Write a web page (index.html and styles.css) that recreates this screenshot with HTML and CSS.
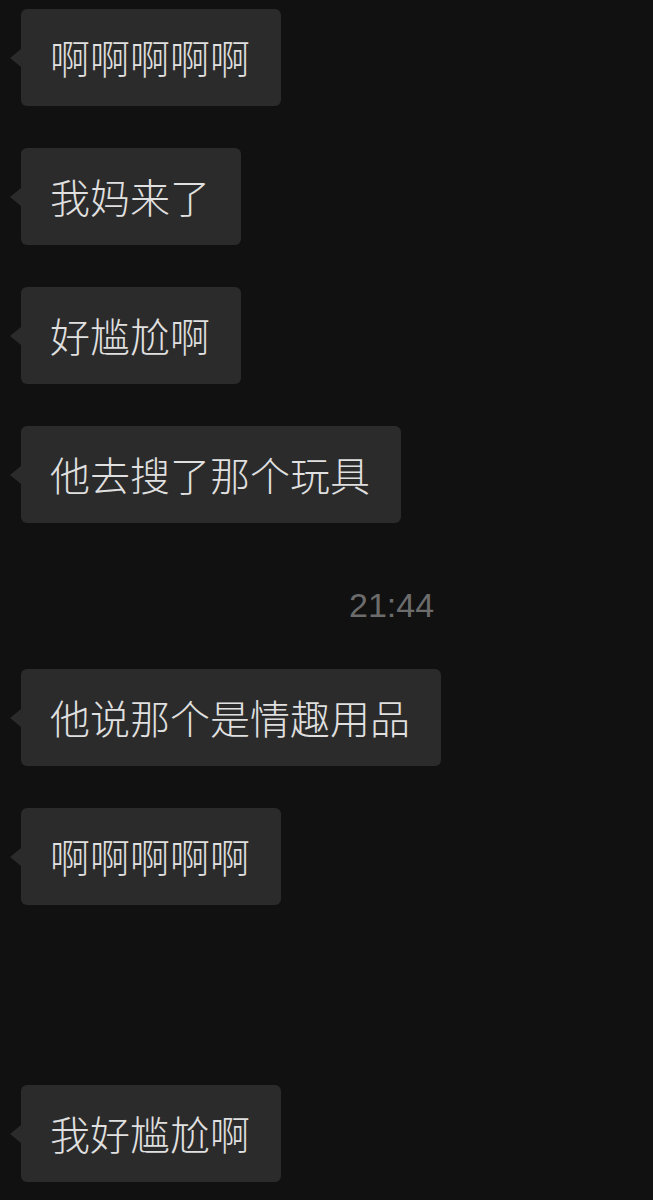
FILE: index.html
```html
<!DOCTYPE html>
<html lang="zh-CN">
<head>
    <meta charset="UTF-8">
    <meta name="viewport" content="width=device-width, initial-scale=1.0">
    <title>聊天记录</title>
    <link rel="stylesheet" href="styles.css">
</head>
<body>
    <div class="chat">
        <div class="bubble">啊啊啊啊啊</div>
        <div class="bubble">我妈来了</div>
        <div class="bubble">好尴尬啊</div>
        <div class="bubble">他去搜了那个玩具</div>

        <div class="time">21:44</div>

        <div class="bubble">他说那个是情趣用品</div>
        <div class="bubble">啊啊啊啊啊</div>

        <div class="bubble later">我好尴尬啊</div>
    </div>
</body>
</html>
```

FILE: styles.css
```css
body {
    margin: 0;
    background-color: #111111;
    font-family: "Noto Sans CJK SC", "Noto Sans", sans-serif;
}
.chat {
    display: flex;
    flex-direction: column;
    align-items: flex-start;
    gap: 42px;
    padding: 9px 0 0 21px;
}
.bubble {
    position: relative;
    background-color: #2b2b2b;
    color: #e0e0e0;
    font-size: 40px;
    font-weight: 300;
    line-height: 57px;
    padding: 20px 31px 20px 29px;
    border-radius: 6px;
}
/* the little tail on the left */
.bubble::before {
    content: "";
    position: absolute;
    left: -11px;
    top: 50%;
    margin-top: -9px;
    border-top: 9px solid transparent;
    border-bottom: 9px solid transparent;
    border-right: 11px solid #2b2b2b;
}
.time {
    color: #6c6c6c;
    font-family: "Liberation Sans", Arial, sans-serif;
    font-size: 34px;
    line-height: 40px;
    margin: 20px 0 2px 328px;
}
.later {
    margin-top: 138px;
}
```
